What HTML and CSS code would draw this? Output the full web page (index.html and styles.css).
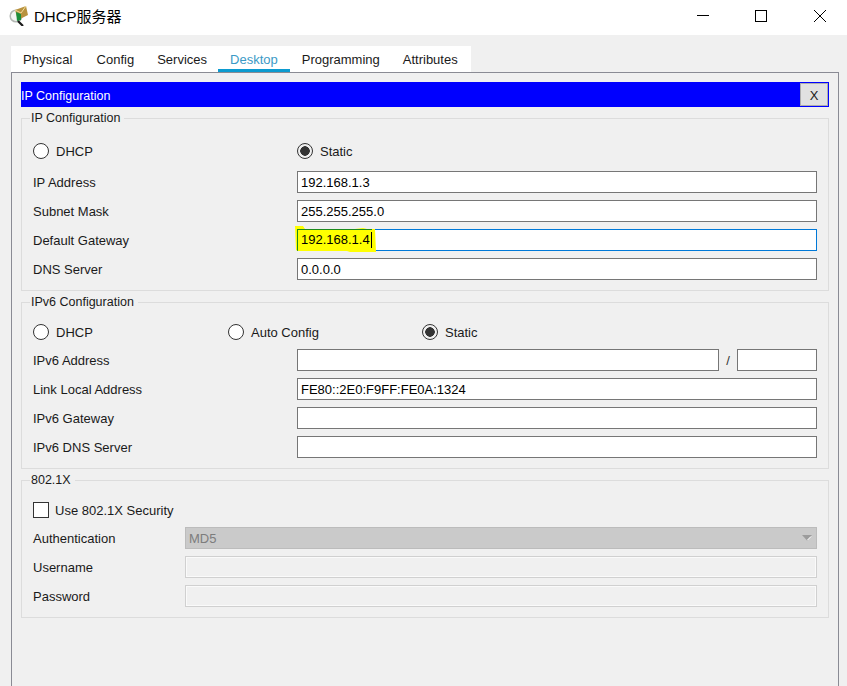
FILE: index.html
```html
<!DOCTYPE html>
<html lang="zh">
<head>
<meta charset="utf-8">
<title>DHCP服务器</title>
<link rel="stylesheet" href="styles.css">
</head>
<body>
<div class="window">
  <header class="titlebar">
    <div class="title-left">
      <svg class="app-icon" width="20" height="20" viewBox="0 0 20 20">
        <circle cx="7" cy="10" r="5.800" fill="#f4f6f4" stroke="#b4b8b4" stroke-width="1.500"/>
        <path d="M6 4 L17 0 L19 9 L9 14 Z" fill="#b8923e"/>
        <path d="M6 4 L12 7 L17 0" fill="none" stroke="#f2dc9a" stroke-width="1"/>
        <path d="M7 6 L12 8 L12 14 L8 15 Z" fill="#1c8f3c"/>
        <path d="M9 15 L14 20" stroke="#1a1a1a" stroke-width="2.200"/>
      </svg>
      <span class="title-text">DHCP服务器</span>
    </div>
    <div class="win-buttons">
      <svg width="12" height="12" viewBox="0 0 12 12"><path d="M0 5.500H12" stroke="#000"/></svg>
      <svg width="12" height="12" viewBox="0 0 12 12"><rect x="0.500" y="0.500" width="11" height="11" fill="none" stroke="#000"/></svg>
      <svg class="win-close" width="12" height="12" viewBox="0 0 12 12"><path d="M0 0L12 12M12 0L0 12" stroke="#000"/></svg>
    </div>
  </header>

  <nav class="tabs">
    <span class="tab">Physical</span>
    <span class="tab">Config</span>
    <span class="tab">Services</span>
    <span class="tab active">Desktop</span>
    <span class="tab">Programming</span>
    <span class="tab">Attributes</span>
  </nav>

  <main class="panel">
    <div class="appbar">
      <span class="appbar-title">IP Configuration</span>
      <span class="close-btn">X</span>
    </div>

    <fieldset class="group group-ip">
      <legend>IP Configuration</legend>
      <div class="radio-row">
        <label class="radio-item w-ip"><i class="radio"></i>DHCP</label>
        <label class="radio-item"><i class="radio on"></i>Static</label>
      </div>
      <div class="row"><span class="label">IP Address</span><div class="field">192.168.1.3</div></div>
      <div class="row"><span class="label">Subnet Mask</span><div class="field">255.255.255.0</div></div>
      <div class="row"><span class="label">Default Gateway</span><div class="field focus"><i class="hl-mark"></i><span class="typed">192.168.1.4</span></div></div>
      <div class="row"><span class="label">DNS Server</span><div class="field">0.0.0.0</div></div>
    </fieldset>

    <fieldset class="group group-v6">
      <legend>IPv6 Configuration</legend>
      <div class="radio-row">
        <label class="radio-item w-v6a"><i class="radio"></i>DHCP</label>
        <label class="radio-item w-v6b"><i class="radio"></i>Auto Config</label>
        <label class="radio-item"><i class="radio on"></i>Static</label>
      </div>
      <div class="row"><span class="label">IPv6 Address</span><div class="field"></div><span class="slash">/</span><div class="field prefix"></div></div>
      <div class="row"><span class="label">Link Local Address</span><div class="field">FE80::2E0:F9FF:FE0A:1324</div></div>
      <div class="row"><span class="label">IPv6 Gateway</span><div class="field"></div></div>
      <div class="row"><span class="label">IPv6 DNS Server</span><div class="field"></div></div>
    </fieldset>

    <fieldset class="group group-x">
      <legend>802.1X</legend>
      <label class="check-row"><i class="check"></i>Use 802.1X Security</label>
      <div class="row"><span class="label short">Authentication</span>
        <div class="field select">MD5<svg class="caret" width="10" height="6" viewBox="0 0 10 6"><path d="M0 0H10L5 5.500Z" fill="#9c9c9c"/><path d="M5.500 5L9 1.500" stroke="#fff" fill="none"/></svg></div></div>
      <div class="row"><span class="label short">Username</span><div class="field disabled"></div></div>
      <div class="row"><span class="label short">Password</span><div class="field disabled"></div></div>
    </fieldset>
  </main>
</div>
</body>
</html>
```
FILE: styles.css
```css
* { box-sizing: border-box; }
html, body { margin: 0; padding: 0; }
body {
  width: 847px;
  height: 686px;
  overflow: hidden;
  background: #f0f0f0;
  color: #1a1a1a;
  font: 13px "Liberation Sans", Arial, "Noto Sans CJK SC", sans-serif;
}
.window { display: flex; flex-direction: column; height: 686px; }

.titlebar {
  height: 35px;
  flex: none;
  background: #fff;
  display: flex;
  align-items: center;
  justify-content: space-between;
}
.title-left { display: flex; align-items: center; padding-left: 9px; margin-top: -4px; }
.app-icon { margin-right: 5px; margin-top: 1px; }
.title-text { font-size: 15px; color: #000; }
.win-buttons { display: flex; gap: 46px; padding-right: 21px; align-items: center; margin-top: -3px; }
.win-close { margin-left: 1px; }

.tabs {
  margin: 11px 0 0 11px;
  width: 460px;
  height: 26px;
  flex: none;
  background: #fff;
  display: flex;
  padding-left: 12px;
}
.tab { line-height: 27px; margin-right: 23px; color: #1a1a1a; }
.tab:first-child { margin-right: 24px; letter-spacing: 0.150px; }
.tab.active { color: #3b9ac6; margin: 0 12px 0 -12px; padding: 0 12px; border-bottom: 3px solid #0c9bd0; }

.panel {
  flex: 1;
  margin: 0 8px 0 11px;
  border: 1px solid #8a8b94;
  border-bottom: 0;
  padding: 9px 9px 0 9px;
}
.appbar {
  height: 25px;
  background: #0000ff;
  border: 1px solid #0000ff;
  display: flex;
  align-items: center;
  justify-content: space-between;
  color: #fff;
  font-size: 12.500px;
}
.appbar-title { margin-left: -1px; padding-top: 2px; }
.close-btn {
  width: 28px;
  height: 23px;
  background: #e1e1e1;
  border: 1px solid #adadad;
  color: #1a1a1a;
  text-align: center;
  line-height: 23px;
  font-size: 13px;
}

.group {
  margin: 0;
  padding: 0 11px;
  border: 1px solid #dcdcdc;
  min-width: 0;
}
.group legend { padding: 0 4px 0 1px; margin-left: -3px; line-height: 14px; font-size: 12.500px; }
.group-ip { margin-top: 4px; height: 180px; }
.group-v6 { margin-top: 4px; height: 174px; }
.group-x { margin-top: 4px; height: 145px; }

.radio-row { display: flex; height: 22px; align-items: center; margin-top: 15px; margin-bottom: 9px; }
.group-v6 .radio-row { margin-top: 12px; margin-bottom: 6px; }
.radio-item { display: flex; align-items: center; }
.w-ip { width: 264px; }
.w-v6a { width: 195px; }
.w-v6b { width: 194px; }
.radio {
  width: 16px;
  height: 16px;
  border-radius: 50%;
  border: 1px solid #333;
  background: #fff;
  margin-right: 7px;
  flex: none;
}
.radio.on { background: radial-gradient(circle, #333 0 4.500px, #f0f0f0 5px); }

.row { display: flex; align-items: center; height: 22px; margin-bottom: 7px; }
.row:last-child { margin-bottom: 0; }
.label { width: 264px; flex: none; }
.label.short { width: 152px; }
.field {
  flex: 1;
  height: 22px;
  background: #fff;
  border: 1px solid #767676;
  padding-left: 3px;
  line-height: 21px;
  color: #000;
  display: flex;
  min-width: 0;
  position: relative;
}
.field.focus { border-color: #0078d7; }
.hl-mark {
  position: absolute;
  left: -3px;
  top: -4px;
  width: 82px;
  height: 27px;
  background: #ffff00;
  clip-path: polygon(0 0, 8px 0, 10px 3px, 60px 3px, 68px 2px, 72px 3px, 80px 3px, 81px 26px, 55px 26px, 52px 25px, 3px 25px, 1px 24px);
}
.hl-mark::before {
  content: "";
  position: absolute;
  left: 2px;
  top: 3px;
  width: 74px;
  height: 22px;
  border: 1px solid #1c8a1c;
  border-right: 0;
}
.typed {
  position: relative;
  height: 16px;
  line-height: 16px;
  margin-top: 2px;
  padding-right: 1px;
  border-right: 1px solid #000;
}
.slash { width: 18px; text-align: center; flex: none; color: #333; }
.field.prefix { flex: none; width: 80px; }

.check-row { display: flex; align-items: center; height: 18px; margin: 14px 0 8px; }
.check {
  width: 16px;
  height: 16px;
  border: 1px solid #333;
  background: #fff;
  margin-right: 6px;
  flex: none;
}
.field.select {
  background: #cacaca;
  border-color: #bcbcbc;
  color: #7d7d7d;
  align-items: center;
  justify-content: space-between;
  padding-right: 4px;
}
.field.disabled { background: #f0f0f0; border-color: #d0d0d0; box-shadow: inset 0 0 0 1px #fafafa; }
```
